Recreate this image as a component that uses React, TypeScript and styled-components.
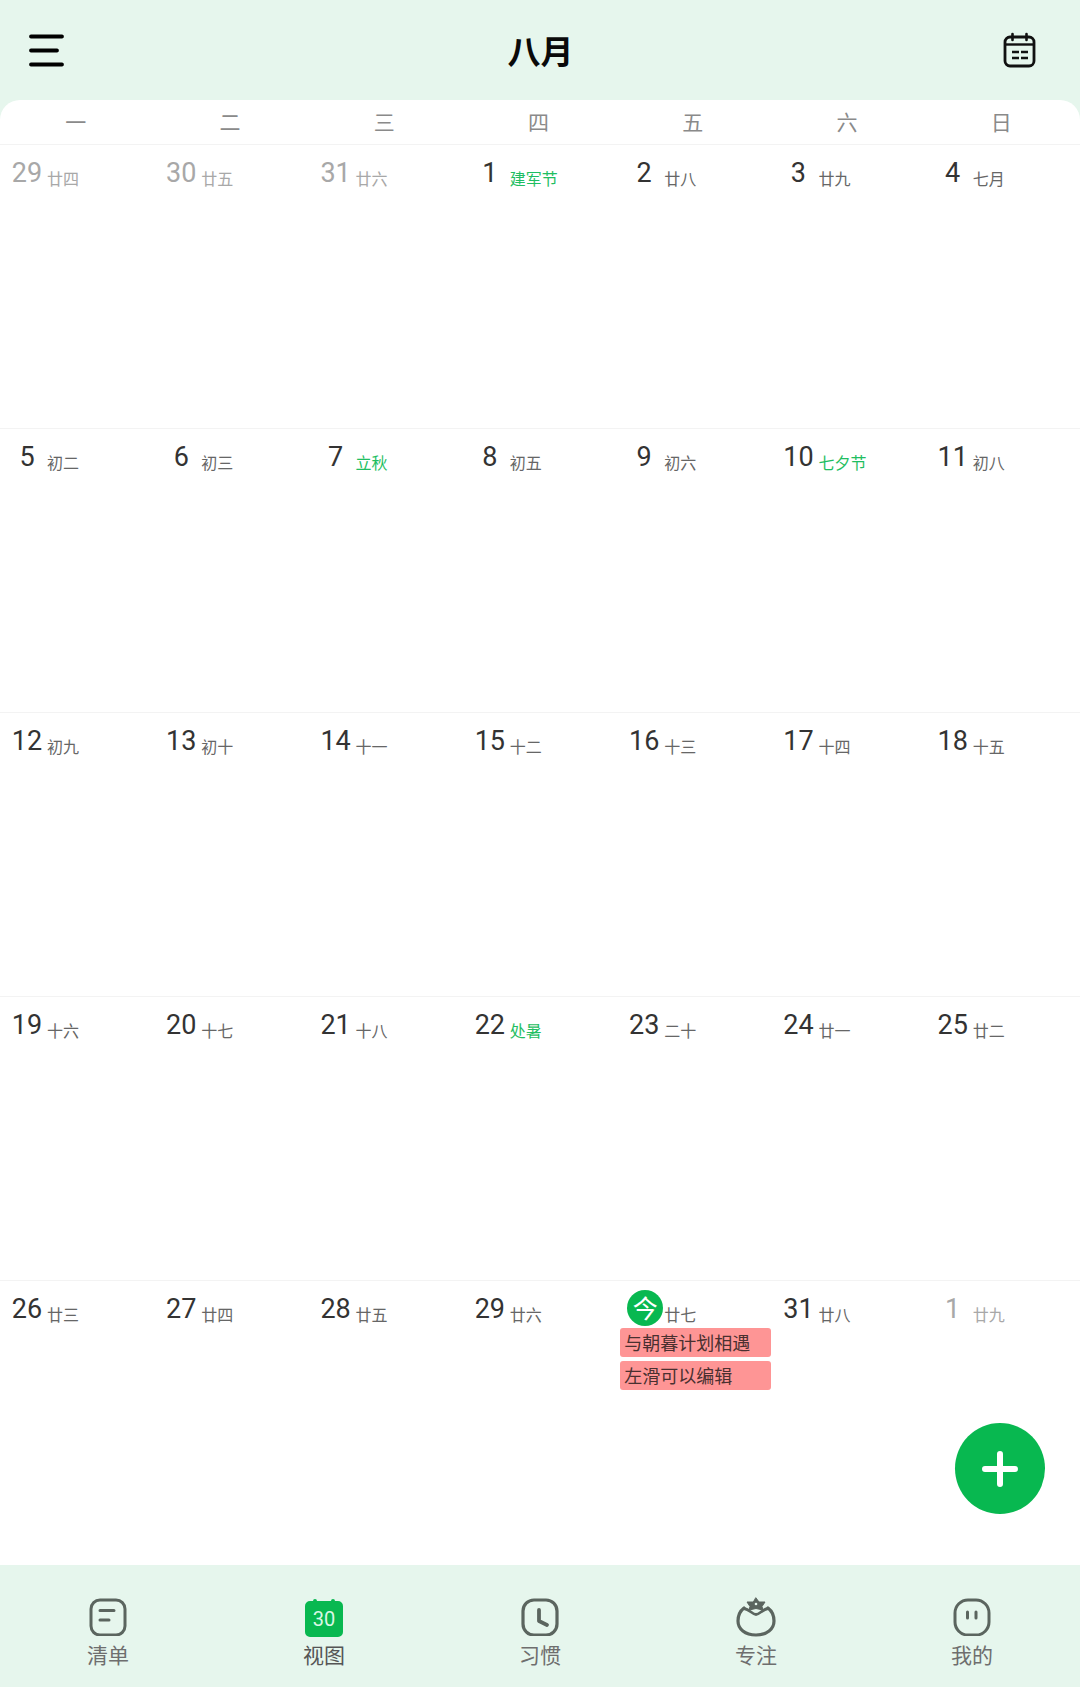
import { createGlobalStyle, styled } from "styled-components";

const GlobalStyle = createGlobalStyle`
  html, body {
    margin: 0;
    padding: 0;
    background: #e6f6ed;
  }
  * {
    box-sizing: border-box;
  }
`;

const FONT = `Roboto, "Noto Sans CJK SC", sans-serif`;

const Page = styled.div`
  width: 1080px;
  height: 1687px;
  display: flex;
  flex-direction: column;
  position: relative;
  overflow: hidden;
  background: #e6f6ed;
  font-family: ${FONT};
`;

const Header = styled.header`
  height: 100px;
  flex: none;
  display: flex;
  align-items: center;
  justify-content: space-between;
  padding: 0 42px 0 29px;
`;

const IconBtn = styled.div`
  width: 36px;
  height: 36px;
  display: flex;
  align-items: center;
  justify-content: center;
`;

const Title = styled.h1`
  margin: 0 0 0 14px;
  font-size: 33px;
  font-weight: 700;
  color: #0a0a0a;
  line-height: 1;
  font-family: "Noto Sans CJK SC", sans-serif;
`;

const Sheet = styled.main`
  flex: 1;
  background: #fff;
  border-radius: 20px 20px 0 0;
  display: flex;
  flex-direction: column;
`;

const WeekRow = styled.div`
  height: 45px;
  flex: none;
  display: grid;
  grid-template-columns: repeat(7, 1fr);
  align-items: center;
  border-bottom: 1px solid #f3f3f3;
`;

const WeekDay = styled.div`
  text-align: center;
  font-size: 21px;
  color: #8a8a8a;
  font-family: "Noto Sans CJK SC", sans-serif;
  padding-right: 3px;
  padding-bottom: 2px;
`;

const Weeks = styled.div`
  flex: 1;
  display: flex;
  flex-direction: column;
`;

const Week = styled.div`
  flex: 1;
  display: grid;
  grid-template-columns: repeat(7, 1fr);
  border-bottom: 1px solid #f3f3f3;
  &:last-child {
    border-bottom: none;
  }
`;

const Cell = styled.div`
  padding-top: 9px;
  min-width: 0;
`;

const DateLine = styled.div`
  height: 38px;
  display: flex;
  align-items: flex-start;
`;

const DayNum = styled.span<{ $muted?: boolean }>`
  display: inline-block;
  width: 38px;
  margin: 2px 0 0 8px;
  text-align: center;
  font-size: 27px;
  line-height: 34px;
  transform: scaleY(1.04);
  color: ${(p) => (p.$muted ? "#a8a8a8" : "#333")};
`;

const Lunar = styled.span<{ $muted?: boolean; $festival?: boolean }>`
  margin-left: 1px;
  padding-top: 12px;
  font-size: 16px;
  line-height: 24px;
  white-space: nowrap;
  color: ${(p) => (p.$festival ? "#1fbe62" : p.$muted ? "#a8a8a8" : "#666")};
  font-family: "Noto Sans CJK SC", sans-serif;
`;

const TodayDot = styled.span`
  width: 36px;
  height: 36px;
  margin-left: 10px;
  border-radius: 50%;
  background: #08b850;
  color: #fff;
  font-size: 25px;
  line-height: 34px;
  text-align: center;
  font-family: "Noto Sans CJK SC", sans-serif;
`;

const Event = styled.div`
  width: 151px;
  height: 29px;
  margin: 0 0 4px 3px;
  padding-left: 4px;
  background: #fe9595;
  border-radius: 3px;
  color: #4a3030;
  font-size: 18px;
  line-height: 28px;
  white-space: nowrap;
  font-family: "Noto Sans CJK SC", sans-serif;
`;

const Fab = styled.button`
  position: absolute;
  left: 955px;
  top: 1423px;
  width: 90px;
  height: 91px;
  border: 0;
  padding: 0;
  border-radius: 50%;
  background: #08b850;
  display: flex;
  align-items: center;
  justify-content: center;
`;

const TabBar = styled.nav`
  height: 122.5px;
  flex: none;
  display: grid;
  grid-template-columns: repeat(5, 216px);
  background: #e6f6ed;
`;

const Tab = styled.div`
  display: flex;
  flex-direction: column;
  align-items: center;
  padding-top: 32px;
  color: #666;
`;

const TabIcon = styled.div`
  width: 40px;
  height: 40px;
  display: flex;
  align-items: center;
  justify-content: center;
`;

const TabLabel = styled.span<{ $active?: boolean }>`
  margin-top: 3px;
  font-size: 21px;
  line-height: 28px;
  color: ${(p) => (p.$active ? "#555" : "#6e6e6e")};
  font-family: "Noto Sans CJK SC", sans-serif;
`;

type Day = { n: number; l: string; muted?: boolean; fest?: boolean; today?: boolean };

const WEEKDAYS = ["一", "二", "三", "四", "五", "六", "日"];

const WEEKS: Day[][] = [
  [
    { n: 29, l: "廿四", muted: true },
    { n: 30, l: "廿五", muted: true },
    { n: 31, l: "廿六", muted: true },
    { n: 1, l: "建军节", fest: true },
    { n: 2, l: "廿八" },
    { n: 3, l: "廿九" },
    { n: 4, l: "七月" },
  ],
  [
    { n: 5, l: "初二" },
    { n: 6, l: "初三" },
    { n: 7, l: "立秋", fest: true },
    { n: 8, l: "初五" },
    { n: 9, l: "初六" },
    { n: 10, l: "七夕节", fest: true },
    { n: 11, l: "初八" },
  ],
  [
    { n: 12, l: "初九" },
    { n: 13, l: "初十" },
    { n: 14, l: "十一" },
    { n: 15, l: "十二" },
    { n: 16, l: "十三" },
    { n: 17, l: "十四" },
    { n: 18, l: "十五" },
  ],
  [
    { n: 19, l: "十六" },
    { n: 20, l: "十七" },
    { n: 21, l: "十八" },
    { n: 22, l: "处暑", fest: true },
    { n: 23, l: "二十" },
    { n: 24, l: "廿一" },
    { n: 25, l: "廿二" },
  ],
  [
    { n: 26, l: "廿三" },
    { n: 27, l: "廿四" },
    { n: 28, l: "廿五" },
    { n: 29, l: "廿六" },
    { n: 30, l: "廿七", today: true },
    { n: 31, l: "廿八" },
    { n: 1, l: "廿九", muted: true },
  ],
];

function MenuIcon() {
  return (
    <svg width="36" height="36" viewBox="0 0 36 36" fill="none" stroke="#000" strokeWidth="3.8" strokeLinecap="round">
      <path d="M2 4.500h31M2 18.500h26M2 32.500h31" />
    </svg>
  );
}

function CalendarIcon() {
  return (
    <svg width="34" height="36" viewBox="0 0 34 36" fill="none" stroke="#111">
      <rect x="2" y="5" width="29" height="29" rx="5" strokeWidth="2.8" />
      <path d="M3 12.500h27" strokeWidth="2.4" />
      <path d="M9.500 2v6M23.500 2v6" strokeWidth="2.6" strokeLinecap="round" />
      <path d="M9 20h7M18 20h7M9 26h7M18 26h7" strokeWidth="2.6" />
    </svg>
  );
}

function ListIcon() {
  return (
    <svg width="38" height="38" viewBox="0 0 38 38" fill="none" stroke="#5b655f" strokeLinecap="round">
      <rect x="2" y="2" width="34" height="35" rx="9" strokeWidth="3" />
      <path d="M11 12.500h14M11 22h9" strokeWidth="3" />
    </svg>
  );
}

function CalendarFilledIcon() {
  return (
    <svg width="38" height="40" viewBox="0 0 38 40">
      <path fill="#08b850" d="M5 4h3a2 2 0 0 1 4 0h14a2 2 0 0 1 4 0h3a5 5 0 0 1 5 5v26a5 5 0 0 1-5 5H5a5 5 0 0 1-5-5V9a5 5 0 0 1 5-5z" />
      <text x="19" y="29" textAnchor="middle" fontFamily="Roboto, sans-serif" fontSize="20" fill="#d9f7e5">30</text>
    </svg>
  );
}

function ClockIcon() {
  return (
    <svg width="38" height="38" viewBox="0 0 38 38" fill="none" stroke="#5b655f" strokeLinecap="round" strokeLinejoin="round">
      <rect x="2" y="2" width="34" height="35" rx="11" strokeWidth="3.2" />
      <path d="M18 12v11l8 4" strokeWidth="3.8" />
    </svg>
  );
}

function TomatoIcon() {
  return (
    <svg width="40" height="40" viewBox="0 0 40 40" fill="none" stroke="#5b655f" strokeLinecap="round" strokeLinejoin="round">
      <path d="M8 11C4 14 2 19 2 24 2 32 9 38 20 38S38 32 38 24C38 19 36 14 32 11" strokeWidth="3.2" />
      <path d="M8 11.500c3 .5 5 2 7 3.500 2 1.500 3.500 2.500 5 2.500s3-1 5-2.500c2-1.500 4-3 7-3.500" strokeWidth="2.800" />
      <path fill="#5b655f" strokeWidth="1" d="M20 1l3 4 6 0-3 4.500 1 3.500-7-1.500-7 1.500 1-3.500-3-4.500 6 0z" />
      <circle cx="20" cy="7" r="1.300" fill="#e6f6ed" stroke="none" />
    </svg>
  );
}

function FaceIcon() {
  return (
    <svg width="38" height="38" viewBox="-1 0 38 38" fill="none" stroke="#5b655f" strokeLinecap="round">
      <rect x="1" y="2" width="34" height="35" rx="13" strokeWidth="3" />
      <path d="M13.500 14v6M22 14v6" strokeWidth="3" />
    </svg>
  );
}

function PlusIcon() {
  return (
    <svg width="36" height="36" viewBox="0 0 36 36" stroke="#fff" strokeWidth="6" strokeLinecap="round">
      <path d="M18 3v30M3 18h30" />
    </svg>
  );
}

const TABS = [
  { label: "清单", icon: <ListIcon /> },
  { label: "视图", icon: <CalendarFilledIcon />, active: true },
  { label: "习惯", icon: <ClockIcon /> },
  { label: "专注", icon: <TomatoIcon /> },
  { label: "我的", icon: <FaceIcon /> },
];

function App() {
  return (
    <Page>
      <GlobalStyle />
      <Header>
        <IconBtn>
          <MenuIcon />
        </IconBtn>
        <Title>八月</Title>
        <IconBtn>
          <CalendarIcon />
        </IconBtn>
      </Header>
      <Sheet>
        <WeekRow>
          {WEEKDAYS.map((d) => (
            <WeekDay key={d}>{d}</WeekDay>
          ))}
        </WeekRow>
        <Weeks>
          {WEEKS.map((week, i) => (
            <Week key={i}>
              {week.map((day) => (
                <Cell key={`${i}-${day.n}`}>
                  <DateLine>
                    {day.today ? (
                      <TodayDot>今</TodayDot>
                    ) : (
                      <DayNum $muted={day.muted}>{day.n}</DayNum>
                    )}
                    <Lunar $muted={day.muted} $festival={day.fest}>
                      {day.l}
                    </Lunar>
                  </DateLine>
                  {day.today && (
                    <>
                      <Event>与朝暮计划相遇</Event>
                      <Event>左滑可以编辑</Event>
                    </>
                  )}
                </Cell>
              ))}
            </Week>
          ))}
        </Weeks>
      </Sheet>
      <TabBar>
        {TABS.map((t) => (
          <Tab key={t.label}>
            <TabIcon>{t.icon}</TabIcon>
            <TabLabel $active={t.active}>{t.label}</TabLabel>
          </Tab>
        ))}
      </TabBar>
      <Fab>
        <PlusIcon />
      </Fab>
    </Page>
  );
}

export default App;
